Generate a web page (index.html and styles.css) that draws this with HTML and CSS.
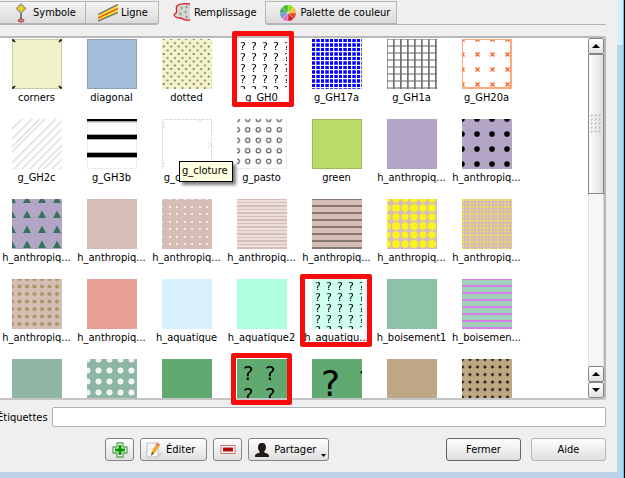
FILE: index.html
```html
<!DOCTYPE html>
<html lang="fr">

<head>
    <meta charset="UTF-8">
    <meta name="viewport" content="width=device-width, initial-scale=1.0">
    <title>Gestionnaire de symboles</title>
    <link rel="stylesheet" href="styles.css">
</head>

<body>
    <div class="window">
    <div class="dialog">
        <div class="tabs" role="tablist">
            <button class="tab tab-first" role="tab">
                <svg width="12" height="20" viewBox="0 0 12 20">
                    <rect x="5" y="8" width="2" height="9" fill="#777"/>
                    <ellipse cx="6" cy="17.500" rx="3" ry="1.500" fill="#999" stroke="#e03030"/>
                    <path d="M6 0l5.500 5.500L6 11 .5 5.500z" fill="#999"/>
                    <path d="M6 2l3.500 3.500L6 9 2.500 5.500z" fill="#f5d800"/>
                </svg>
                Symbole
            </button>
            <button class="tab tab-line-style" role="tab">
                <svg width="20" height="18" viewBox="0 0 20 18">
                    <path d="M0 11L20 1v8L0 17z" fill="#ffe030"/>
                    <path d="M0 10.500L20 .5M0 17L20 8.500" stroke="#777" stroke-width="1.500"/>
                    <path d="M0 14L20 4.500" stroke="#e8401c" stroke-width="1.300"/>
                </svg>
                Ligne
            </button>
            <button class="tab active" role="tab" aria-selected="true">
                <svg width="17" height="18" viewBox="0 0 17 18">
                    <path d="M17 1C10 0 6 1 4 3s1 5-1 7-3 2 0 4 4 0 7 2 5 1 7 1z" fill="#d2d8d2"/>
                    <path d="M17 1C10 0 6 1 4 3s1 5-1 7-3 2 0 4 4 0 7 2 5 1 7 1" fill="none" stroke="#e02020" stroke-width="1.300"/>
                    <path d="M7 5h3M8.500 3.500v3M12 4h3M13.500 2.500v3M6 11h3M7.500 9.500v3M11 9h3M12.500 7.500v3M12 14h3M13.500 12.500v3" stroke="#9a9a9a"/>
                </svg>
                Remplissage
            </button>
            <button class="tab tab-last" role="tab">
                <svg width="16" height="16" viewBox="0 0 16 16">
                    <path d="M8 8V0a8 8 0 0 1 5.700 2.300z" fill="#8ce020"/>
                    <path d="M8 8l5.700-5.700A8 8 0 0 1 16 8z" fill="#f0c030"/>
                    <path d="M8 8h8a8 8 0 0 1-2.300 5.700z" fill="#e84820"/>
                    <path d="M8 8l5.700 5.700A8 8 0 0 1 8 16z" fill="#d82030"/>
                    <path d="M8 8v8a8 8 0 0 1-5.700-2.300z" fill="#e070b8"/>
                    <path d="M8 8l-5.700 5.700A8 8 0 0 1 0 8z" fill="#7898d8"/>
                    <path d="M8 8H0a8 8 0 0 1 2.300-5.700z" fill="#48b070"/>
                    <path d="M8 8L2.300 2.300A8 8 0 0 1 8 0z" fill="#50b820"/>
                    <path d="M8 0v16M0 8h16M2.300 2.300l11.400 11.400M13.700 2.300L2.300 13.700" stroke="#efefef" stroke-width=".4"/>
                </svg>
                Palette de couleur
            </button>
            <div class="tab-rest"></div>
        </div>

        <div class="list">
            <ul class="symbols">
                <li>
                    <svg class="swatch"><rect x=".5" y=".5" width="49" height="49" fill="#f0f4c8" stroke="#c8cda8"/><path d="M0 1h1l2 2M50 1h-1l-2 2M0 49h1l2-2M50 49h-1l-2-2" fill="none" stroke="#000" stroke-width="1.500"/></svg>
                    <span>corners</span>
                </li>
                <li>
                    <svg class="swatch"><rect x=".5" y=".5" width="49" height="49" fill="#a6bedd" stroke="#8ba2ba"/></svg>
                    <span>diagonal</span>
                </li>
                <li>
                    <svg class="swatch">
                        <pattern id="dotted" width="7.500" height="7.500" patternUnits="userSpaceOnUse"><path d="M5.500 3v2M4.500 4h2M1.700 6.500v2M.7 7.500h2M1.700-1v2M.7 0h2" stroke="#8f7050" stroke-width="1.200"/></pattern>
                        <rect width="50" height="50" fill="#f0f4c8"/><rect width="50" height="50" fill="url(#dotted)"/>
                    </svg>
                    <span>dotted</span>
                </li>
                <li>
                    <svg class="swatch">
                        <pattern id="gh0" y="2" width="11" height="11" patternUnits="userSpaceOnUse"><text x="3" y="9" font-size="11">?</text></pattern>
                        <rect width="50" height="50" fill="url(#gh0)"/>
                    </svg>
                    <span>g_GH0</span>
                </li>
                <li>
                    <svg class="swatch">
                        <pattern id="gh17a" width="9" height="9" patternUnits="userSpaceOnUse"><path d="M0 0h3v3H0zM4.300 0h3.500v3H4.300zM0 4.300h3v3.500H0zM4.300 4.300h3.500v3.500H4.300z" fill="#00f"/></pattern>
                        <rect width="50" height="50" fill="url(#gh17a)"/>
                    </svg>
                    <span>g_GH17a</span>
                </li>
                <li>
                    <svg class="swatch">
                        <pattern id="gh1a" x="-1" y="-1" width="7" height="7" patternUnits="userSpaceOnUse"><rect width="7" height="2" fill="#b0b0b0"/><rect width="1.700" height="7" fill="#707070"/></pattern>
                        <rect width="50" height="50" fill="url(#gh1a)"/>
                    </svg>
                    <span>g_GH1a</span>
                </li>
                <li>
                    <svg class="swatch">
                        <pattern id="gh20a" x="-7" y="-7" width="15" height="15" patternUnits="userSpaceOnUse"><path d="M5.500 5.500l4 4M9.500 5.500l-4 4" stroke="#f26522" stroke-width="1.400"/></pattern>
                        <rect width="50" height="50" fill="url(#gh20a)"/><path d="M.5 49V.5H49" fill="none" stroke="#ffa880"/><path d="M49 0v49H0" fill="none" stroke="#ffa880" stroke-width="2"/>
                    </svg>
                    <span>g_GH20a</span>
                </li>

                <li>
                    <svg class="swatch">
                        <path d="M-2 12L12-2M-2 22L22-2M-2 30L30-2M-2 35L35-2M-2 46L46-2M-2 54L54-2M4 56L56 4M10 58L58 10M20 56L56 20M25 57L57 25M34 56L56 34M42 56L56 42" stroke="#ddd" stroke-width="1.400"/>
                    </svg>
                    <span>g_GH2c</span>
                </li>
                <li>
                    <svg class="swatch">
                        <rect x=".5" y=".5" width="49" height="49" fill="#fff" stroke="#eee"/>
                        <path d="M0 .5h50M0 18h50M0 36h50" stroke="#aaa" stroke-width="6"/><path d="M0 0h50M0 18h50M0 36h50" stroke="#000" stroke-width="4"/>
                    </svg>
                    <span>g_GH3b</span>
                </li>
                <li>
                    <svg class="swatch">
                        <path d="M.5 50V.5H49.500V50" fill="none" stroke="#ddd" stroke-dasharray="3 1"/>
                        <path d="M35-2l5 5M40-2l-5 5M-2 3l5 6M3 3l-5 6M46 24l5 5M51 24l-5 5M-2 43l5 5M3 43l-5 5" stroke="#ddd"/>
                    </svg>
                    <span>g_cloture</span>
                </li>
                <li>
                    <svg class="swatch">
                        <pattern id="pasto" x="-5" y="-5" width="10.500" height="10.500" patternUnits="userSpaceOnUse"><circle cx="5.250" cy="5.250" r="2.200" fill="none" stroke="#444"/></pattern>
                        <rect width="50" height="50" fill="url(#pasto)"/><path d="M49.500 0V49.500H0" fill="none" stroke="#eee"/>
                    </svg>
                    <span>g_pasto</span>
                </li>
                <li>
                    <svg class="swatch"><rect x=".5" y=".5" width="49" height="49" fill="#badd69" stroke="#9cba5c"/></svg>
                    <span>green</span>
                </li>
                <li>
                    <svg class="swatch"><rect width="50" height="50" fill="#b3a5c6"/></svg>
                    <span>h_anthropiq...</span>
                </li>
                <li>
                    <svg class="swatch">
                        <pattern id="blackdots" x="-7" y="-7" width="15" height="15" patternUnits="userSpaceOnUse"><circle cx="7" cy="7" r="2.800"/></pattern>
                        <rect width="50" height="50" fill="#b3a5c6"/><rect width="50" height="50" fill="url(#blackdots)"/>
                    </svg>
                    <span>h_anthropiq...</span>
                </li>

                <li>
                    <svg class="swatch">
                        <pattern id="triangles" x="-7" y="-7" width="15" height="15" patternUnits="userSpaceOnUse"><path d="M7 3.500l4 7.500H3z" fill="#34745a"/></pattern>
                        <rect width="50" height="50" fill="#b3a5c6"/><rect width="50" height="50" fill="url(#triangles)"/>
                    </svg>
                    <span>h_anthropiq...</span>
                </li>
                <li>
                    <svg class="swatch"><rect width="50" height="50" fill="#d6bdb5"/></svg>
                    <span>h_anthropiq...</span>
                </li>
                <li>
                    <svg class="swatch">
                        <pattern id="whitedots" width="15" height="15" patternUnits="userSpaceOnUse"><path d="M0 0h1v1H0zM0 7h1v2H0zM7 0h2v1H7zM7 7h2v2H7zM14 0h1v1h-1zM14 7h1v2h-1zM0 14h1v1H0zM7 14h2v1H7zM14 14h1v1h-1z" fill="#f4eceb"/></pattern>
                        <rect width="50" height="50" fill="#d6bdb5"/><rect width="50" height="50" fill="url(#whitedots)"/>
                    </svg>
                    <span>h_anthropiq...</span>
                </li>
                <li>
                    <svg class="swatch">
                        <pattern id="finelines" width="7" height="7" patternUnits="userSpaceOnUse"><path d="M0 1h7v2H0zM0 4h7v2H0z" fill="#ebdedb"/></pattern>
                        <rect width="50" height="50" fill="#d6bdb5"/><rect width="50" height="50" fill="url(#finelines)"/>
                    </svg>
                    <span>h_anthropiq...</span>
                </li>
                <li>
                    <svg class="swatch">
                        <pattern id="lines" y="-1" width="7" height="7" patternUnits="userSpaceOnUse"><rect width="7" height="2" fill="#86776f"/></pattern>
                        <rect width="50" height="50" fill="#d6bdb5"/><rect width="50" height="50" fill="url(#lines)"/>
                    </svg>
                    <span>h_anthropiq...</span>
                </li>
                <li>
                    <svg class="swatch">
                        <pattern id="yellow" x="-4" y="-4" width="18" height="18" patternUnits="userSpaceOnUse"><g fill="#faf31c"><circle cx="4" cy="4" r="3.400"/><circle cx="13" cy="4" r="3.700"/><circle cx="4" cy="13" r="3.700"/><circle cx="13" cy="13" r="4"/></g></pattern>
                        <rect width="50" height="50" fill="#d6bdb5"/><rect width="50" height="50" fill="url(#yellow)"/>
                    </svg>
                    <span>h_anthropiq...</span>
                </li>
                <li>
                    <svg class="swatch">
                        <pattern id="yellowfine" width="7" height="7" patternUnits="userSpaceOnUse"><path d="M0 0h2v2H0zM4 0h1v2H4zM0 4h2v1H0zM4 4h1v1H4z" fill="#f1ea2c"/></pattern>
                        <rect width="50" height="50" fill="#d6bdb5"/><rect width="50" height="50" fill="url(#yellowfine)"/>
                    </svg>
                    <span>h_anthropiq...</span>
                </li>

                <li>
                    <svg class="swatch">
                        <pattern id="olive" x="-4" y="-4" width="7.500" height="7.500" patternUnits="userSpaceOnUse"><circle cx="4" cy="4" r="2" fill="#a2955d"/></pattern>
                        <rect width="50" height="50" fill="#d6bdb5"/><rect width="50" height="50" fill="url(#olive)"/>
                    </svg>
                    <span>h_anthropiq...</span>
                </li>
                <li>
                    <svg class="swatch"><rect width="50" height="50" fill="#e9a096"/></svg>
                    <span>h_anthropiq...</span>
                </li>
                <li>
                    <svg class="swatch"><rect width="50" height="50" fill="#d9f1ff"/></svg>
                    <span>h_aquatique</span>
                </li>
                <li>
                    <svg class="swatch"><rect width="50" height="50" fill="#aeffdf"/></svg>
                    <span>h_aquatique2</span>
                </li>
                <li>
                    <svg class="swatch">
                        <pattern id="aqua" y="2" width="11" height="11" patternUnits="userSpaceOnUse"><text x="3" y="9" font-size="11">?</text></pattern>
                        <rect width="50" height="50" fill="#cfffed"/><rect width="50" height="50" fill="url(#aqua)"/>
                    </svg>
                    <span>h_aquatiqu...</span>
                </li>
                <li>
                    <svg class="swatch"><rect width="50" height="50" fill="#8cc2a8"/></svg>
                    <span>h_boisement1</span>
                </li>
                <li>
                    <svg class="swatch">
                        <pattern id="purple" y="-1" width="7" height="7" patternUnits="userSpaceOnUse"><rect width="7" height="2" fill="#d67fe8"/></pattern>
                        <rect width="50" height="50" fill="#9fcfb8"/><rect width="50" height="50" fill="url(#purple)"/>
                    </svg>
                    <span>h_boisemen...</span>
                </li>

                <li>
                    <svg class="swatch"><rect width="50" height="50" fill="#8fb6a4"/></svg>
                </li>
                <li>
                    <svg class="swatch">
                        <pattern id="bigwhite" x="-5" y="-5" width="11" height="11" patternUnits="userSpaceOnUse"><circle cx="5.500" cy="5.500" r="3" fill="#f0f5f2"/></pattern>
                        <rect width="50" height="50" fill="#8fb6a4"/><rect width="50" height="50" fill="url(#bigwhite)"/>
                    </svg>
                </li>
                <li>
                    <svg class="swatch"><rect width="50" height="50" fill="#60a971"/></svg>
                </li>
                <li>
                    <svg class="swatch">
                        <pattern id="forest" y="4" width="22" height="22" patternUnits="userSpaceOnUse"><text x="6" y="17" font-size="20">?</text></pattern>
                        <rect width="50" height="50" fill="#60a971"/><rect width="50" height="50" fill="url(#forest)"/>
                    </svg>
                </li>
                <li>
                    <svg class="swatch"><rect width="50" height="50" fill="#60a971"/><text x="9" y="37" font-size="36">?</text><path d="M48 13l2-1v3z"/></svg>
                </li>
                <li>
                    <svg class="swatch"><rect width="50" height="50" fill="#bda784"/></svg>
                </li>
                <li>
                    <svg class="swatch">
                        <pattern id="brown" x="-4" y="-4" width="7.500" height="7.500" patternUnits="userSpaceOnUse"><circle cx="4.500" cy="4.500" r="1.500" fill="#1c1812"/></pattern>
                        <rect width="50" height="50" fill="#bda784"/><rect width="50" height="50" fill="url(#brown)"/>
                    </svg>
                </li>
            </ul>
            <div class="scrollbar">
                <button class="arrow" aria-label="Haut"><svg width="8" height="4"><path d="M4 0l4 4H0z"/></svg></button>
                <div class="thumb">
                    <svg width="12" height="20"><pattern id="grip" width="4" height="4" patternUnits="userSpaceOnUse"><path d="M1 3V1h2" fill="none" stroke="#bbb"/></pattern><rect width="12" height="20" fill="url(#grip)"/></svg>
                </div>
                <div class="track"></div>
                <button class="arrow" aria-label="Haut"><svg width="8" height="4"><path d="M4 0l4 4H0z"/></svg></button>
                <button class="arrow" aria-label="Bas"><svg width="8" height="4"><path d="M0 0h8L4 4z"/></svg></button>
            </div>
            <div class="tooltip" role="tooltip">g_cloture</div>
            <!-- red frames -->
            <div class="mark mark-gh0"></div>
            <div class="mark mark-aqua"></div>
            <div class="mark mark-forest"></div>
        </div>

        <div class="tags">
            <label for="tags">Étiquettes</label>
            <input type="text" id="tags">
        </div>

        <div class="buttons">
            <button class="btn btn-icon" aria-label="Ajouter">
                <svg width="16" height="16" viewBox="0 0 16 16">
                    <path d="M5 1h6v4h4v6h-4v4H5v-4H1V5h4z" fill="#fff" stroke="#5aa55a" stroke-width="1.300" stroke-linejoin="round"/>
                    <path d="M6.500 3h3v3.500H13v3H9.500V13h-3V9.500H3v-3h3.500z" fill="#0a960a"/>
                </svg>
            </button>
            <button class="btn">
                <svg width="16" height="16" viewBox="0 0 16 16">
                    <path d="M1 1h11v14H1z" fill="#f4f6fa" stroke="#b8c0cc"/>
                    <path d="M10 15l6-5v2l-4 3z" fill="#ccc"/>
                    <path d="M5 13l1-4 5-8 3 1.500-5 8z" fill="#f8a818"/>
                    <path d="M10.500 2l3 1.500" stroke="#e87070" stroke-width="2"/>
                    <path d="M5 14l1-4 2 1.500z" fill="#553"/>
                </svg>
                Éditer
            </button>
            <button class="btn btn-icon" aria-label="Supprimer">
                <svg width="16" height="16" viewBox="0 0 16 16">
                    <rect x="1" y="3.500" width="14" height="8" fill="#fff" stroke="#d07070"/>
                    <rect x="3" y="5.500" width="10" height="4" fill="#b80c0c"/>
                </svg>
            </button>
            <button class="btn btn-menu">
                <svg width="16" height="16" viewBox="0 0 16 16">
                    <path d="M8 1c3 0 4 2 4 4.500S10.500 9 10 10c0 1 5 1 5 4v1H1v-1c0-3 5-3 5-4C5 9 4 8 4 5.500S5 1 8 1z" fill="#231a18"/>
                </svg>
                Partager
                <svg class="caret" width="5" height="3"><path d="M0 0h5L2.500 3z"/></svg>
            </button>
            <button class="btn btn-wide btn-default">Fermer</button>
            <button class="btn btn-wide btn-light">Aide</button>
        </div>
    </div>
    </div>
</body>

</html>
```

FILE: styles.css
```css
* {
    box-sizing: border-box;
}

body {
    margin: 0;
    font-family: "DejaVu Sans Condensed", "DejaVu Sans", sans-serif;
    font-size: 11px;
    color: #000;
}

button,
input {
    font: inherit;
    color: inherit;
}

/* window frame */
.window {
    height: 100vh;
    padding: 0 7px 6px 0;
    background: linear-gradient(#dcebf8 45px, #bcd2ea 45px);
    border-right: 1px solid #000;
    box-shadow: inset -1px 0 #4cc8e8;
}

.dialog {
    display: flex;
    flex-direction: column;
    height: 100%;
    padding-right: 11px;
    background-color: #efefef;
    overflow: hidden;
}

/* tabs */
.tabs {
    display: flex;
    flex: none;
    height: 25px;
    margin-bottom: 11px;
}

.tab {
    display: flex;
    align-items: center;
    height: 24px;
    margin-top: 1px;
    white-space: nowrap;
    background: linear-gradient(#f3f3f3, #dcdcdc);
    border: 1px solid #b4b4b4;
    border-bottom-width: 2px;
    border-left: none;
}

.tab-first {
    gap: 6px;
    padding: 0 9px 0 15px;
}

.tab-line-style {
    gap: 3px;
    padding: 0 10px 0 12px;
    border-radius: 0 0 3px 0;
}

.tab.active {
    gap: 4px;
    margin-top: 0;
    padding: 0 8px 0 14px;
    background: none;
    border: none;
}

.tab-last {
    gap: 5px;
    padding: 0 6px 0 14px;
    border-left: 1px solid #b4b4b4;
    border-radius: 0 0 0 3px;
}

.tab-rest {
    flex: 1;
    border-bottom: 1px solid #b4b4b4;
}

/* symbol list */
.list {
    position: relative;
    display: flex;
    flex: 1;
    min-height: 0;
    background-color: #fff;
    border: 2px solid #b8b8b8;
    border-bottom-color: #c4c4c4;
    border-left: none;
    border-radius: 0 3px 3px 0;
}

.symbols {
    display: grid;
    flex: 1;
    grid-template-columns: repeat(auto-fill, 75px);
    grid-auto-rows: 80px;
    margin: 0 0 0 -1px;
    padding: 0;
    list-style: none;
    overflow: hidden;
}

.symbols li {
    display: flex;
    flex-direction: column;
    align-items: center;
    gap: 3px;
    padding-top: 1px;
    white-space: nowrap;
}

.symbols span {
    line-height: 12px;
}

.swatch {
    flex: none;
    width: 50px;
    height: 50px;
    overflow: hidden;
    font-family: "DejaVu Sans", sans-serif;
}

.mark {
    position: absolute;
    border: 5px solid #f80c0c;
    border-radius: 2px;
}

.mark-gh0 {
    top: -7px;
    left: 232px;
    width: 62px;
    height: 76px;
}

.mark-aqua {
    top: 236px;
    left: 300px;
    width: 72px;
    height: 73px;
}

.mark-forest {
    top: 315px;
    left: 231px;
    width: 61px;
    height: 52px;
}

.tooltip {
    position: absolute;
    top: 123px;
    left: 179px;
    padding: 2px 4px 3px 2px;
    line-height: 14px;
    background-color: #ffffe1;
    border: 1px solid #000;
    box-shadow: 3px 3px 3px rgba(0, 0, 0, 0.5);
}

/* scrollbar */
.scrollbar {
    display: flex;
    flex: none;
    flex-direction: column;
    width: 16px;
}

.arrow {
    display: flex;
    align-items: center;
    justify-content: center;
    flex: none;
    height: 16px;
    padding: 0;
    background: linear-gradient(#fff, #e2e2e2);
    border: 1px solid #858585;
    border-radius: 2px;
}

.thumb {
    display: flex;
    align-items: center;
    justify-content: center;
    flex: none;
    height: 140px;
    background: linear-gradient(90deg, #fff, #dedede);
    border: 1px solid #858585;
}

.track {
    flex: 1;
    background: repeating-conic-gradient(#fff 0 25%, #eee 0 50%) 0 0 / 2px 2px;
    border: 1px dotted #c4c4c4;
    border-width: 0 1px;
}

/* tags */
.tags {
    display: flex;
    align-items: center;
    gap: 4px;
    margin: 7px 0 11px -3px;
}

.tags input {
    flex: 1;
    min-width: 0;
    height: 20px;
    padding: 0 4px;
    background-color: #fff;
    border: 1px solid #b0b0b0;
    border-radius: 2px;
}

/* bottom buttons */
.buttons {
    display: flex;
    flex: none;
    gap: 6px;
    margin-bottom: 11px;
    padding-left: 105px;
}

.btn {
    display: flex;
    align-items: center;
    justify-content: center;
    gap: 4px;
    height: 23px;
    padding: 0 11px 0 5px;
    background: linear-gradient(#fdfdfd, #dfdfdf);
    border: 1px solid #858585;
    border-radius: 3px;
}

.btn-icon {
    width: 29px;
    padding: 0;
}

.btn-menu {
    position: relative;
    padding-right: 12px;
}

.caret {
    position: absolute;
    right: 2px;
    bottom: 3px;
}

.btn-wide {
    width: 75px;
    padding: 0;
}

.btn-default {
    margin-left: auto;
    border-color: #666;
}

.btn-light {
    margin-left: 4px;
    border-color: #b4b4b4;
}
```
